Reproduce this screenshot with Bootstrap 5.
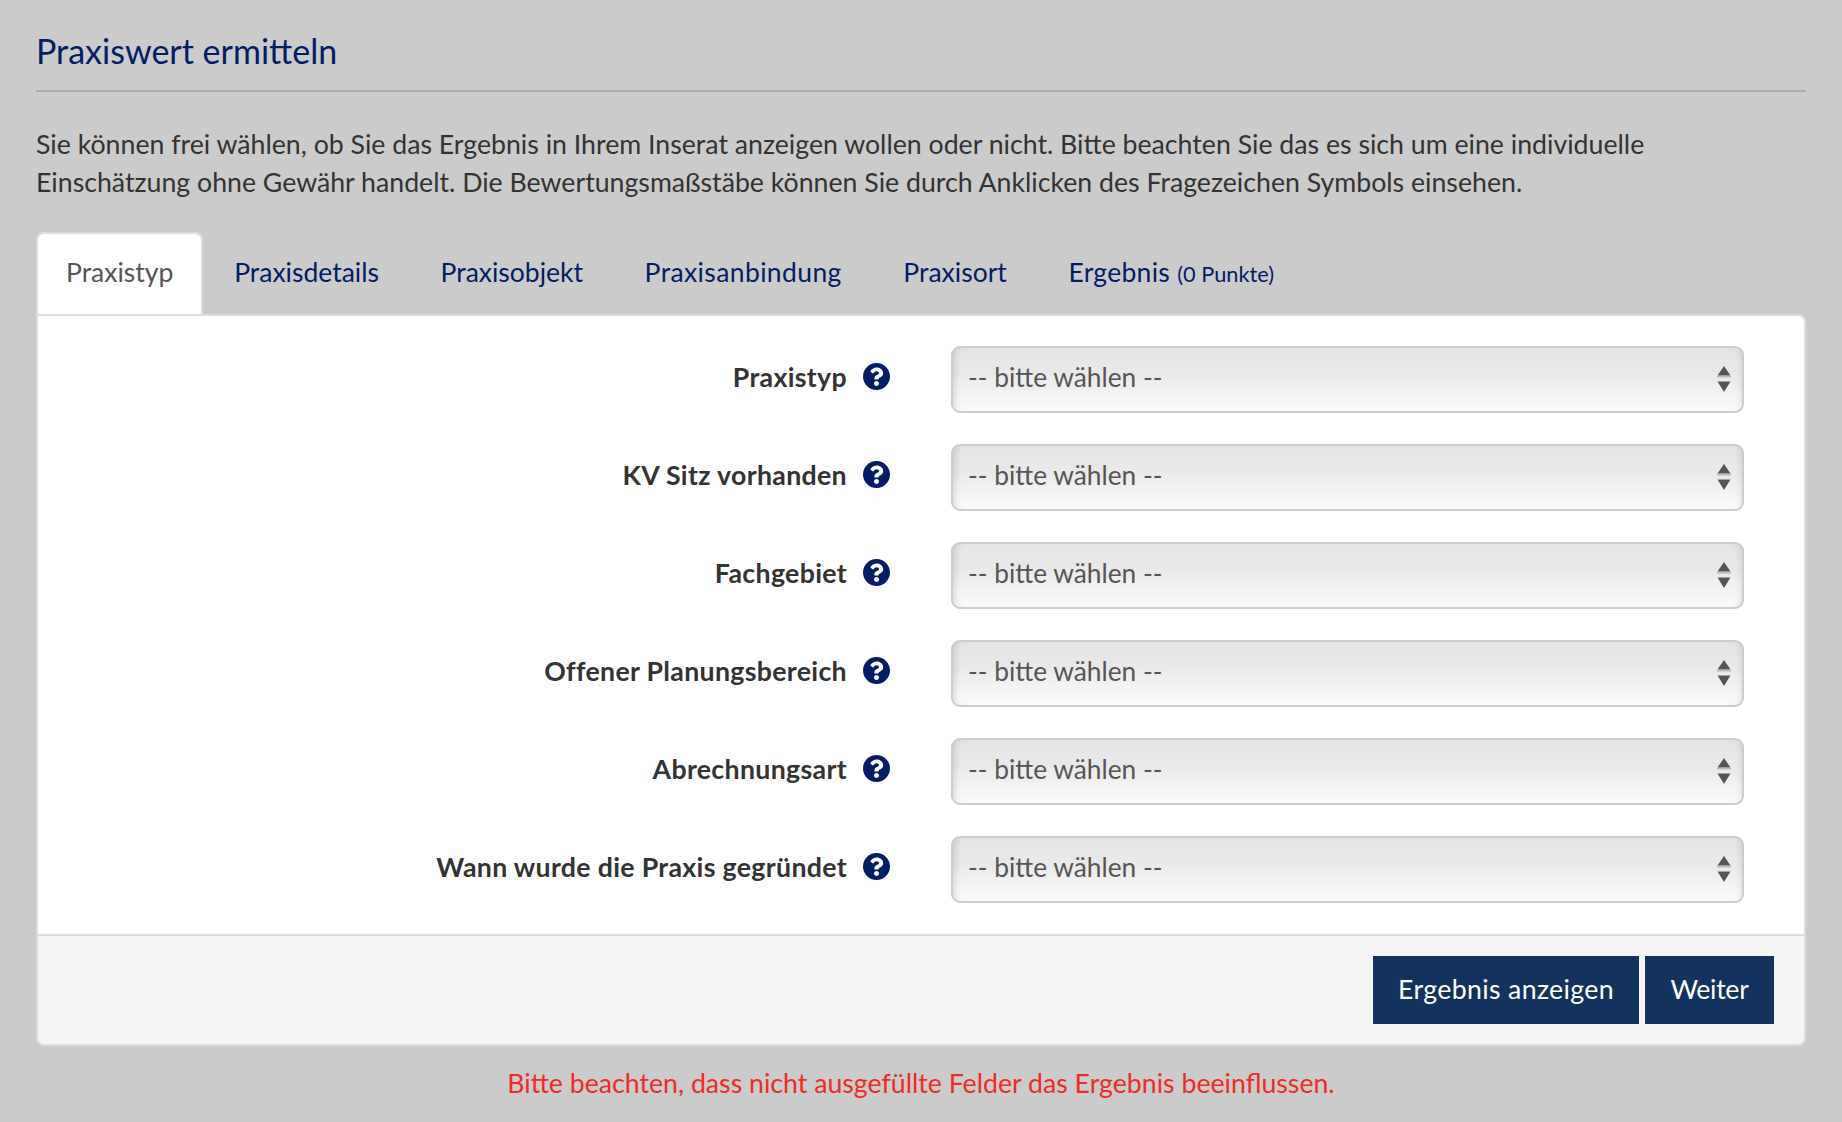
<!DOCTYPE html>
<html lang="de"><head><meta charset="utf-8"><title>Praxiswert ermitteln</title>
<link href="https://cdn.jsdelivr.net/npm/bootstrap@5.3.0/dist/css/bootstrap.min.css" rel="stylesheet">
<style>
html,body{background:#cbcbcb;}
body{font-family:"Lato","Open Sans","Liberation Sans",sans-serif;color:#333;font-size:26.7px;line-height:38px;min-height:1122px;}
.pw-wrap{padding:0 36px;}
.pw-title{font-size:34px;line-height:40px;font-weight:400;color:#031c66;margin:0;padding:31px 0 19px;border-bottom:2px solid #aaa;}
.pw-intro{margin:0;padding:33px 0 31px;}
.pw-tabs{border-bottom:0;gap:0;margin:0;}
.pw-tabs .nav-link{color:#031c66;font-size:26.5px;line-height:38px;padding:21px 30.8px;border:0;border-radius:0;background:transparent;margin:0;}
.pw-tabs .nav-link small{font-size:21.8px;letter-spacing:0;}
.pw-tabs .nav-item:nth-child(4) .nav-link{letter-spacing:.38px;}
.pw-tabs .nav-item:nth-child(6) .nav-link{letter-spacing:.3px;}
.pw-tabs .nav-link.active{background:#fff;color:#555;border:2px solid #ddd;border-bottom:0;border-radius:8px 8px 0 0;padding:19px 28px 23px;margin-bottom:-2px;position:relative;z-index:1;}
.pw-panel{background:#fff;border:2px solid #ddd;border-radius:0 8px 8px 8px;overflow:hidden;}
.pw-body{padding:30px 60px 31px 0;display:flex;flex-direction:column;gap:31px;}
.pw-row{height:67px;}
.pw-label{width:809px;flex:none;font-weight:700;color:#333;text-align:right;margin:0;padding-bottom:5px;letter-spacing:.33px;}
.pw-help{width:27px;height:27px;flex:none;margin:-6px 0 0 16px;fill:#031c66;}
.pw-select{flex:1;margin-left:61px;height:67px;font-family:inherit;font-size:26.3px;color:#555;border:2px solid #ccc;border-radius:9px;padding:0 50px 6px 15px;line-height:38px;
 background-color:#f5f5f5;background-image:url("data:image/svg+xml,%3Csvg xmlns='http://www.w3.org/2000/svg' width='14' height='27'%3E%3Cpath fill='%23555' d='M7 0l6.500 9.500H.5zM.5 15.500h13L7 26z'/%3E%3Crect y='10' width='14' height='1.500' fill='%23bbb'/%3E%3C/svg%3E"),linear-gradient(#e4e4e4,#e9e9e9 40%,#fbfbfb);
 background-repeat:no-repeat;background-position:right 11px center,0 0;background-size:14px 27px,100% 100%;
 box-shadow:inset 7px 0 6px -5px rgba(0,0,0,.12),inset -7px 0 6px -5px rgba(0,0,0,.08);}
.pw-foot{background:#f4f4f4;border-top:2px solid #ddd;padding:20px 30px 20px 0;display:flex;justify-content:flex-end;gap:6px;}
.pw-btn{background:#13335f;color:#fff;border:0;border-radius:0;font-size:26.7px;line-height:38px;height:68px;padding:0 0 3px;}
.pw-btn:hover{background:#13335f;color:#fff;}
.pw-btn-main{width:266px;letter-spacing:.35px;}
.pw-btn-next{width:129px;letter-spacing:-.3px;}
.pw-note{color:#ee2c24;text-align:center;margin:0;padding:18px 0 0;}
</style></head><body>
<div class="pw-wrap">
<h1 class="pw-title">Praxiswert ermitteln</h1>
<p class="pw-intro">Sie können frei wählen, ob Sie das Ergebnis in Ihrem Inserat anzeigen wollen oder nicht. Bitte beachten Sie das es sich um eine individuelle<br>Einschätzung ohne Gewähr handelt. Die Bewertungsmaßstäbe können Sie durch Anklicken des Fragezeichen Symbols einsehen.</p>
<ul class="nav nav-tabs pw-tabs">
<li class="nav-item"><a class="nav-link active" href="#">Praxistyp</a></li>
<li class="nav-item"><a class="nav-link" href="#">Praxisdetails</a></li>
<li class="nav-item"><a class="nav-link" href="#">Praxisobjekt</a></li>
<li class="nav-item"><a class="nav-link" href="#">Praxisanbindung</a></li>
<li class="nav-item"><a class="nav-link" href="#">Praxisort</a></li>
<li class="nav-item"><a class="nav-link" href="#">Ergebnis <small>(0 Punkte)</small></a></li>
</ul>
<div class="pw-panel">
<div class="pw-body">
<div class="pw-row d-flex align-items-center"><label class="pw-label">Praxistyp</label><svg class="pw-help" viewBox="8 8 496 496"><path d="M504 256c0 136.997-111.043 248-248 248S8 392.997 8 256C8 119.083 119.043 8 256 8s248 111.083 248 248zM262.655 90c-54.497 0-89.255 22.957-116.549 63.758-3.536 5.286-2.353 12.415 2.715 16.258l34.699 26.31c5.205 3.947 12.621 3.008 16.665-2.122 17.864-22.658 30.113-35.797 57.303-35.797 20.429 0 45.698 13.148 45.698 32.958 0 14.976-12.363 22.667-32.534 33.976C247.128 238.528 216 254.941 216 296v4c0 6.627 5.373 12 12 12h56c6.627 0 12-5.373 12-12v-1.333c0-28.462 83.186-29.647 83.186-106.667 0-58.002-60.165-102-116.531-102zM256 338c-25.365 0-46 20.635-46 46 0 25.364 20.635 46 46 46s46-20.636 46-46c0-25.365-20.635-46-46-46z"/></svg><select class="pw-select form-select"><option>-- bitte wählen --</option></select></div>
<div class="pw-row d-flex align-items-center"><label class="pw-label">KV Sitz vorhanden</label><svg class="pw-help" viewBox="8 8 496 496"><path d="M504 256c0 136.997-111.043 248-248 248S8 392.997 8 256C8 119.083 119.043 8 256 8s248 111.083 248 248zM262.655 90c-54.497 0-89.255 22.957-116.549 63.758-3.536 5.286-2.353 12.415 2.715 16.258l34.699 26.31c5.205 3.947 12.621 3.008 16.665-2.122 17.864-22.658 30.113-35.797 57.303-35.797 20.429 0 45.698 13.148 45.698 32.958 0 14.976-12.363 22.667-32.534 33.976C247.128 238.528 216 254.941 216 296v4c0 6.627 5.373 12 12 12h56c6.627 0 12-5.373 12-12v-1.333c0-28.462 83.186-29.647 83.186-106.667 0-58.002-60.165-102-116.531-102zM256 338c-25.365 0-46 20.635-46 46 0 25.364 20.635 46 46 46s46-20.636 46-46c0-25.365-20.635-46-46-46z"/></svg><select class="pw-select form-select"><option>-- bitte wählen --</option></select></div>
<div class="pw-row d-flex align-items-center"><label class="pw-label">Fachgebiet</label><svg class="pw-help" viewBox="8 8 496 496"><path d="M504 256c0 136.997-111.043 248-248 248S8 392.997 8 256C8 119.083 119.043 8 256 8s248 111.083 248 248zM262.655 90c-54.497 0-89.255 22.957-116.549 63.758-3.536 5.286-2.353 12.415 2.715 16.258l34.699 26.31c5.205 3.947 12.621 3.008 16.665-2.122 17.864-22.658 30.113-35.797 57.303-35.797 20.429 0 45.698 13.148 45.698 32.958 0 14.976-12.363 22.667-32.534 33.976C247.128 238.528 216 254.941 216 296v4c0 6.627 5.373 12 12 12h56c6.627 0 12-5.373 12-12v-1.333c0-28.462 83.186-29.647 83.186-106.667 0-58.002-60.165-102-116.531-102zM256 338c-25.365 0-46 20.635-46 46 0 25.364 20.635 46 46 46s46-20.636 46-46c0-25.365-20.635-46-46-46z"/></svg><select class="pw-select form-select"><option>-- bitte wählen --</option></select></div>
<div class="pw-row d-flex align-items-center"><label class="pw-label">Offener Planungsbereich</label><svg class="pw-help" viewBox="8 8 496 496"><path d="M504 256c0 136.997-111.043 248-248 248S8 392.997 8 256C8 119.083 119.043 8 256 8s248 111.083 248 248zM262.655 90c-54.497 0-89.255 22.957-116.549 63.758-3.536 5.286-2.353 12.415 2.715 16.258l34.699 26.31c5.205 3.947 12.621 3.008 16.665-2.122 17.864-22.658 30.113-35.797 57.303-35.797 20.429 0 45.698 13.148 45.698 32.958 0 14.976-12.363 22.667-32.534 33.976C247.128 238.528 216 254.941 216 296v4c0 6.627 5.373 12 12 12h56c6.627 0 12-5.373 12-12v-1.333c0-28.462 83.186-29.647 83.186-106.667 0-58.002-60.165-102-116.531-102zM256 338c-25.365 0-46 20.635-46 46 0 25.364 20.635 46 46 46s46-20.636 46-46c0-25.365-20.635-46-46-46z"/></svg><select class="pw-select form-select"><option>-- bitte wählen --</option></select></div>
<div class="pw-row d-flex align-items-center"><label class="pw-label">Abrechnungsart</label><svg class="pw-help" viewBox="8 8 496 496"><path d="M504 256c0 136.997-111.043 248-248 248S8 392.997 8 256C8 119.083 119.043 8 256 8s248 111.083 248 248zM262.655 90c-54.497 0-89.255 22.957-116.549 63.758-3.536 5.286-2.353 12.415 2.715 16.258l34.699 26.31c5.205 3.947 12.621 3.008 16.665-2.122 17.864-22.658 30.113-35.797 57.303-35.797 20.429 0 45.698 13.148 45.698 32.958 0 14.976-12.363 22.667-32.534 33.976C247.128 238.528 216 254.941 216 296v4c0 6.627 5.373 12 12 12h56c6.627 0 12-5.373 12-12v-1.333c0-28.462 83.186-29.647 83.186-106.667 0-58.002-60.165-102-116.531-102zM256 338c-25.365 0-46 20.635-46 46 0 25.364 20.635 46 46 46s46-20.636 46-46c0-25.365-20.635-46-46-46z"/></svg><select class="pw-select form-select"><option>-- bitte wählen --</option></select></div>
<div class="pw-row d-flex align-items-center"><label class="pw-label">Wann wurde die Praxis gegründet</label><svg class="pw-help" viewBox="8 8 496 496"><path d="M504 256c0 136.997-111.043 248-248 248S8 392.997 8 256C8 119.083 119.043 8 256 8s248 111.083 248 248zM262.655 90c-54.497 0-89.255 22.957-116.549 63.758-3.536 5.286-2.353 12.415 2.715 16.258l34.699 26.31c5.205 3.947 12.621 3.008 16.665-2.122 17.864-22.658 30.113-35.797 57.303-35.797 20.429 0 45.698 13.148 45.698 32.958 0 14.976-12.363 22.667-32.534 33.976C247.128 238.528 216 254.941 216 296v4c0 6.627 5.373 12 12 12h56c6.627 0 12-5.373 12-12v-1.333c0-28.462 83.186-29.647 83.186-106.667 0-58.002-60.165-102-116.531-102zM256 338c-25.365 0-46 20.635-46 46 0 25.364 20.635 46 46 46s46-20.636 46-46c0-25.365-20.635-46-46-46z"/></svg><select class="pw-select form-select"><option>-- bitte wählen --</option></select></div>
</div>
<div class="pw-foot"><button class="btn pw-btn pw-btn-main">Ergebnis anzeigen</button><button class="btn pw-btn pw-btn-next">Weiter</button></div>
</div>
<p class="pw-note">Bitte beachten, dass nicht ausgefüllte Felder das Ergebnis beeinflussen.</p>
</div>
<script src="https://cdn.jsdelivr.net/npm/bootstrap@5.3.0/dist/js/bootstrap.bundle.min.js"></script>
</body></html>
